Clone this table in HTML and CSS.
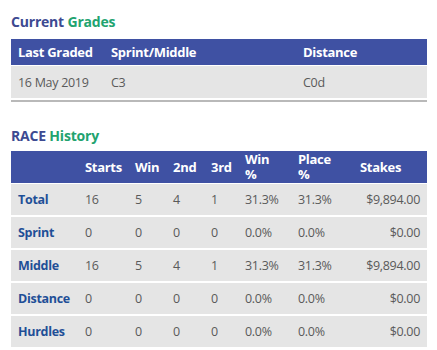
FILE: index.html
```html
<!DOCTYPE html>
<html>
<head>
<meta charset="utf-8">
<link rel="stylesheet" href="styles.css">
</head>
<body>
<div class="page">
  <h2 class="title"><span class="dark">Current</span> <span class="green">Grades</span></h2>
  <div class="grades-wrap">
    <table class="tbl grades">
      <colgroup><col class="g1"><col class="g2"><col class="g3"></colgroup>
      <thead>
        <tr><th>Last Graded</th><th>Sprint/Middle</th><th>Distance</th></tr>
      </thead>
      <tbody>
        <tr><td>16 May 2019</td><td>C3</td><td>C0d</td></tr>
      </tbody>
    </table>
  </div>

  <h2 class="title second"><span class="dark">RACE</span> <span class="green">History</span></h2>
  <table class="tbl history">
    <colgroup>
      <col class="h1"><col class="h2"><col class="h3"><col class="h4"><col class="h5"><col class="h6"><col class="h7"><col class="h8">
    </colgroup>
    <thead>
      <tr><th></th><th>Starts</th><th>Win</th><th>2nd</th><th>3rd</th><th><span class="two">Win</span><span class="two">%</span></th><th><span class="two">Place</span><span class="two">%</span></th><th>Stakes</th></tr>
    </thead>
    <tbody>
      <tr><td class="lbl">Total</td><td>16</td><td>5</td><td>4</td><td>1</td><td>31.3%</td><td>31.3%</td><td class="money">$9,894.00</td></tr>
      <tr><td class="lbl">Sprint</td><td>0</td><td>0</td><td>0</td><td>0</td><td>0.0%</td><td>0.0%</td><td class="money">$0.00</td></tr>
      <tr><td class="lbl">Middle</td><td>16</td><td>5</td><td>4</td><td>1</td><td>31.3%</td><td>31.3%</td><td class="money">$9,894.00</td></tr>
      <tr><td class="lbl">Distance</td><td>0</td><td>0</td><td>0</td><td>0</td><td>0.0%</td><td>0.0%</td><td class="money">$0.00</td></tr>
      <tr><td class="lbl">Hurdles</td><td>0</td><td>0</td><td>0</td><td>0</td><td>0.0%</td><td>0.0%</td><td class="money">$0.00</td></tr>
    </tbody>
  </table>
</div>
</body>
</html>
```

FILE: styles.css
```css
html, body {
  margin: 0;
  padding: 0;
  background: #ffffff;
}
body {
  font-family: "Open Sans", "Noto Sans", sans-serif;
  color: #555555;
}
.page {
  padding: 14px 10px 0 11px;
  width: 416px;
}
.title {
  margin: 0 0 9px 0;
  font-size: 14px;
  line-height: 16px;
  font-weight: 700;
  letter-spacing: -0.2px;
}
.title.second {
  margin-top: 26px;
  margin-bottom: 7px;
}
.dark { color: #3d4a91; }
.green { color: #22a36f; }

.tbl {
  width: 416px;
  table-layout: fixed;
  border-collapse: separate;
  border-spacing: 0;
  font-size: 12.5px;
}
.tbl th {
  background: #3f51a3;
  color: #ffffff;
  font-weight: 700;
  text-align: left;
  padding: 0 0 0 7px;
  font-size: 13px;
  letter-spacing: -0.3px;
}
.tbl td {
  background: #e5e5e5;
  padding: 0 0 0 7px;
  color: #5a5a5a;
  letter-spacing: -0.3px;
}

.grades-wrap {
  border-bottom: 2px solid #b9b9b9;
  padding-bottom: 2px;
}
.grades th { height: 26px; border-bottom: 1px solid #fff; }
.grades td { height: 32px; }
.g1 { width: 93px; }
.g2 { width: 192px; }
.g3 { width: 131px; }

.history th {
  height: 32px;
  line-height: 15px;
  border-bottom: 1px solid #fff;
  vertical-align: middle;
}
.history th .two {
  display: block;
  line-height: 15px;
}
.history td {
  height: 31px;
  border-bottom: 2px solid #fff;
}
.history td.lbl {
  color: #1f4f97;
  font-weight: 700;
}
.history td.money {
  text-align: right;
  padding-right: 7px;
}
.h1 { width: 67px; }
.h2 { width: 50px; }
.h3 { width: 38px; }
.h4 { width: 38px; }
.h5 { width: 34px; }
.h6 { width: 53px; }
.h7 { width: 62px; }
.h8 { width: 74px; }
```
